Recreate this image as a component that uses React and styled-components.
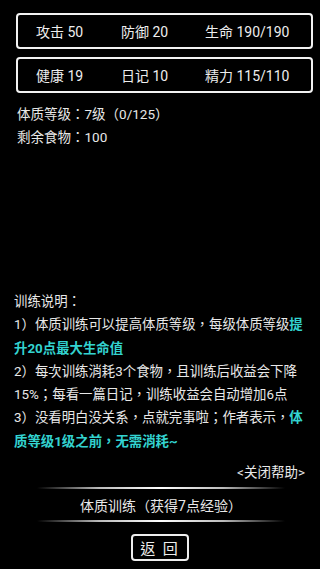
import React from "react"
import styled, { createGlobalStyle } from "styled-components"

const GlobalStyle = createGlobalStyle`
  html, body {
    margin: 0;
    padding: 0;
    background: #000;
  }
  body {
    font-family: Roboto, "Noto Sans CJK TC", "Noto Sans CJK SC", sans-serif;
    color: #e8e8e8;
  }
`

const Screen = styled.div`
  width: 320px;
  height: 569px;
  box-sizing: border-box;
  display: flex;
  flex-direction: column;
  padding: 13px 0 8px;
  background: #000;
`

const StatBoxes = styled.div`
  display: flex;
  flex-direction: column;
  gap: 8px;
  margin: 0 7px 0 16px;
`

const StatBox = styled.div`
  height: 36px;
  box-sizing: border-box;
  border: 2px solid #f2f2f2;
  border-radius: 4px;
  display: grid;
  grid-template-columns: 85px 84px auto;
  align-items: center;
  padding-left: 18px;
  font-size: 14px;
  color: #eee;
`

const Info = styled.div`
  margin: 10px 0 0 17px;
  font-size: 13.5px;
  line-height: 23px;
`

const Help = styled.div`
  margin: auto 14px 0 14px;
  font-size: 13.4px;
  line-height: 23.3px;
`

const Hi = styled.span`
  color: #33d3d0;
  font-weight: 700;
`

const CloseLink = styled.div`
  text-align: right;
  margin: 9px 15px 0 0;
  font-size: 13.5px;
  line-height: 20px;
`

const TrainBar = styled.div`
  margin: 5px 35px 0 37px;
  height: 35px;
  display: flex;
  align-items: center;
  justify-content: center;
  position: relative;
  font-size: 14px;

  &::before,
  &::after {
    content: "";
    position: absolute;
    left: 0;
    right: 0;
    height: 2px;
    background: linear-gradient(
      to right,
      rgba(255, 255, 255, 0),
      rgba(220, 220, 220, 0.85) 25%,
      #fff 50%,
      rgba(220, 220, 220, 0.85) 75%,
      rgba(255, 255, 255, 0)
    );
  }
  &::before {
    top: 0;
  }
  &::after {
    bottom: 0;
  }
`

const BackButton = styled.button`
  align-self: center;
  margin-top: 12px;
  width: 58px;
  height: 27px;
  box-sizing: border-box;
  border: 2px solid #eee;
  border-radius: 4px;
  background: #000;
  color: #eee;
  font-family: inherit;
  font-size: 15px;
  padding: 0;
  letter-spacing: 2px;
`

const App = () => {
  return (
    <Screen>
      <GlobalStyle />
      <StatBoxes>
        <StatBox>
          <span>攻击 50</span>
          <span>防御 20</span>
          <span>生命 190/190</span>
        </StatBox>
        <StatBox>
          <span>健康 19</span>
          <span>日记 10</span>
          <span>精力 115/110</span>
        </StatBox>
      </StatBoxes>
      <Info>
        <div>体质等级：7级（0/125）</div>
        <div>剩余食物：100</div>
      </Info>
      <Help>
        <div>训练说明：</div>
        <div>
          1）体质训练可以提高体质等级，每级体质等级<Hi>提升20点最大生命值</Hi>
        </div>
        <div>2）每次训练消耗3个食物，且训练后收益会下降15%；每看一篇日记，训练收益会自动增加6点</div>
        <div>
          3）没看明白没关系，点就完事啦；作者表示，<Hi>体质等级1级之前，无需消耗~</Hi>
        </div>
      </Help>
      <CloseLink>&lt;关闭帮助&gt;</CloseLink>
      <TrainBar>体质训练（获得7点经验）</TrainBar>
      <BackButton>返 回</BackButton>
    </Screen>
  )
}

export default App
